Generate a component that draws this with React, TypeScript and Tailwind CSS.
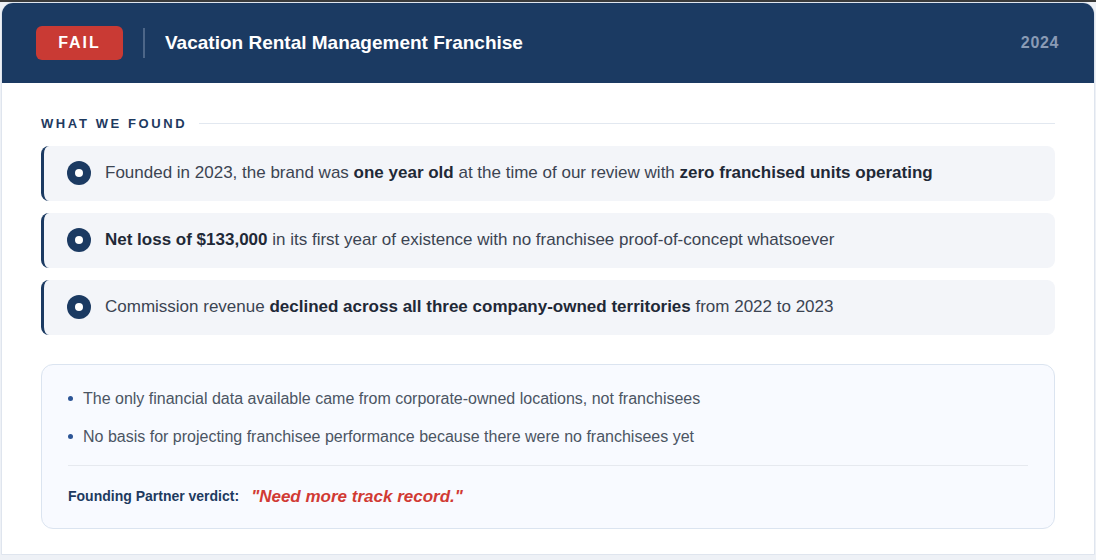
export default function App() {
  const findings = [
    <>Founded in 2023, the brand was <b className="font-bold text-[#1f2937]">one year old</b> at the time of our review with <b className="font-bold text-[#1f2937]">zero franchised units operating</b></>,
    <><b className="font-bold text-[#1f2937]">Net loss of $133,000</b> in its first year of existence with no franchisee proof-of-concept whatsoever</>,
    <>Commission revenue <b className="font-bold text-[#1f2937]">declined across all three company-owned territories</b> from 2022 to 2023</>,
  ];
  return (
    <div className="h-[560px] w-[1096px] border-t-2 border-[#3a3a3a] bg-[#eef1f6] px-[1px] font-[family-name:Liberation_Sans,Arial,sans-serif]">
      <div className="h-[553px] overflow-hidden rounded-t-xl border border-[#dfe5ee] bg-white">
        <div className="flex h-[80px] items-center bg-[#1b3a62] pl-[34px] pr-[35px]">
          <span className="flex h-[34px] w-[87px] items-center justify-center rounded-md bg-[#c93a34] text-[16px] font-bold tracking-[0.12em] text-white">FAIL</span>
          <span className="ml-[20px] h-[30px] w-[2px] bg-[#4d6688]" />
          <h1 className="ml-[20px] text-[19px] font-bold text-white">Vacation Rental Management Franchise</h1>
          <span className="ml-auto text-[16px] font-bold tracking-[0.04em] text-[#8a9bb5]">2024</span>
        </div>
        <div className="px-[39px] pt-[31px]">
          <div className="flex items-center gap-3">
            <span className="text-[13px] font-bold tracking-[0.2em] text-[#1e3a5f]">WHAT WE FOUND</span>
            <span className="h-px flex-1 bg-[#e2e8f0]" />
          </div>
          <div className="mt-[12px] flex flex-col gap-[12px]">
            {findings.map((f, i) => (
              <div key={i} className="flex h-[55px] items-center rounded-lg border-l-[3px] border-[#1b3a62] bg-[#f3f5f9] pl-[23px]">
                <span className="flex h-[24px] w-[24px] shrink-0 items-center justify-center rounded-full bg-[#1b3a62]">
                  <span className="h-[8px] w-[8px] rounded-full bg-white" />
                </span>
                <p className="ml-[14px] text-[17px] text-[#3b4452]">{f}</p>
              </div>
            ))}
          </div>
          <div className="mt-[29px] rounded-xl border border-[#dbe4f0] bg-[#f8faff] px-[26px] pt-[22px] pb-[19px]">
            <ul className="flex flex-col gap-[14px] text-[16px] text-[#4b5563]">
              <li className="flex items-center gap-[10px]"><span className="h-[5px] w-[5px] rounded-full bg-[#2c5596]" />The only financial data available came from corporate-owned locations, not franchisees</li>
              <li className="flex items-center gap-[10px]"><span className="h-[5px] w-[5px] rounded-full bg-[#2c5596]" />No basis for projecting franchisee performance because there were no franchisees yet</li>
            </ul>
            <div className="mt-[16px] h-px bg-[#e6e9ef]" />
            <div className="mt-[18px] flex items-center gap-[12px]">
              <span className="text-[14px] font-bold text-[#1e3a5f]">Founding Partner verdict:</span>
              <span className="text-[17px] font-bold italic text-[#d13a34]">"Need more track record."</span>
            </div>
          </div>
        </div>
      </div>
    </div>
  );
}
